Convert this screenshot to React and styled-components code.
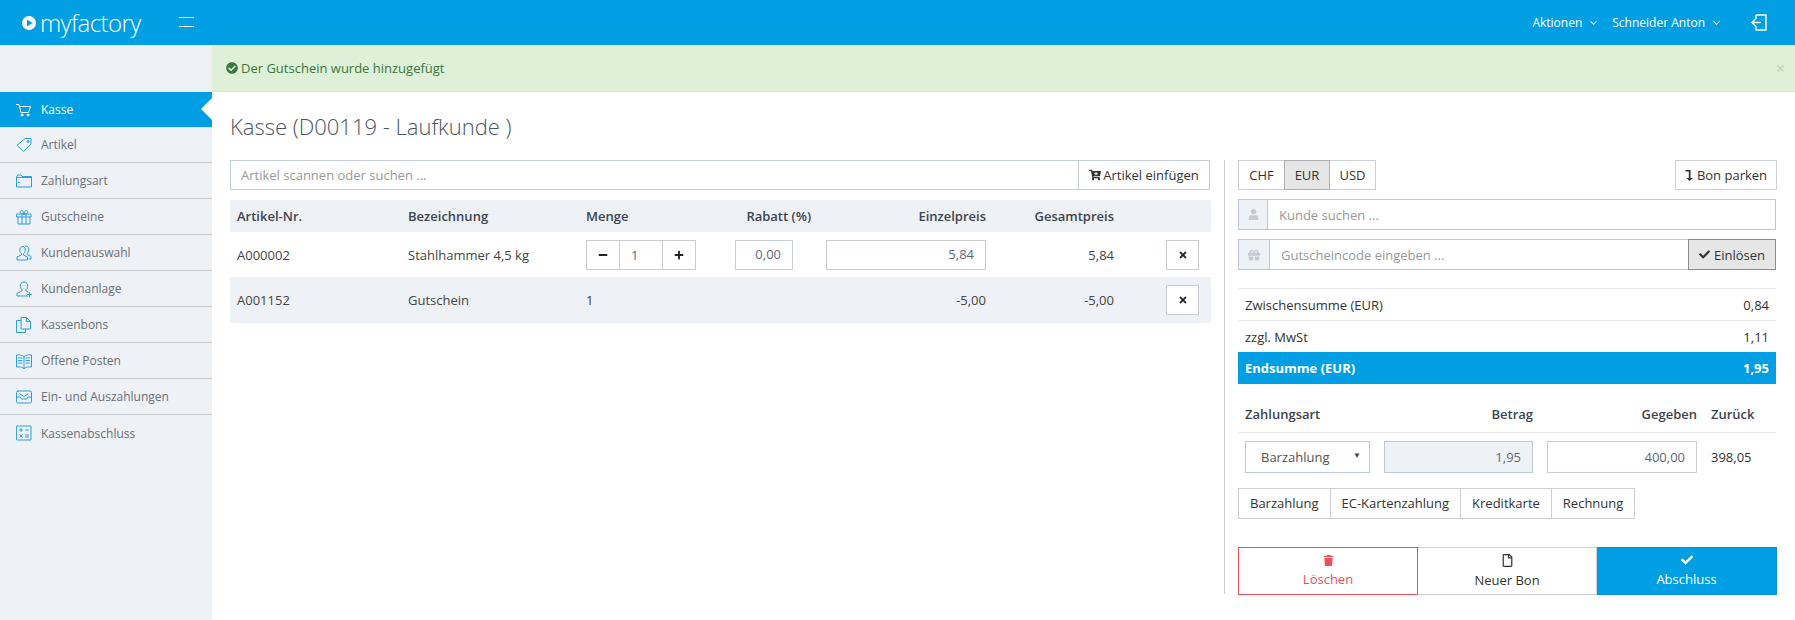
import React from 'react';
import styled, { createGlobalStyle } from 'styled-components';
import {
  FaCartPlus,
  FaCheck,
  FaCheckCircle,
  FaGift,
  FaMinus,
  FaPlus,
  FaRegFile,
  FaTimes,
  FaTrash,
  FaUser,
} from 'react-icons/fa';

const blue = '#009fe3';
const grey = '#eef1f5';

const line = { fill: 'none', stroke: 'currentColor', strokeWidth: 1, strokeLinejoin: 'round', strokeLinecap: 'round' };

const Svg = ({ children, size = 16 }) => (
  <svg width={size} height={size} viewBox="0 0 16 16" {...line}>
    {children}
  </svg>
);

const icons = {
  cart: (
    <Svg>
      <path d="M.5 2.5h2.5l2 8h7.5l2-6H4" />
      <circle cx="6" cy="13" r="1" />
      <circle cx="12" cy="13" r="1" />
    </Svg>
  ),
  tag: (
    <Svg>
      <path d="M9.5 1.5h5.5v5.5l-7.5 7.5-6-6z" />
      <circle cx="12" cy="4.5" r="1" />
    </Svg>
  ),
  folder: (
    <Svg>
      <path d="M.5 4.5v9.5h15V3.5H6l-1-1.5H1.5l-1 2.5zM.5 4.5H15" />
      <path d="M2.5 9.5h1" />
    </Svg>
  ),
  gift: (
    <Svg>
      <path d="M1 5h14v3H1zM2 8v7h12V8M6 5v10M10 5v10" />
      <path d="M8 5C5 5 3.5 3.5 4.5 2S7.500 1.500 8 5c.5-3.500 2.500-4.500 3.500-3S11 5 8 5z" />
    </Svg>
  ),
  users: (
    <Svg>
      <path d="M7 1.500c-2.500 0-3.500 2-3.200 4.200.2 1.300.7 2.300 1.700 3v1.300L1 12v3h10.500v-3l-4-2V8.700c1-.7 1.500-1.700 1.700-3C9.500 3.500 9 1.500 7 1.500z" />
      <path d="M9.500 1c2.500 0 3.500 1.500 3.300 4-.1 1.300-.6 2.500-1.600 3.200V9.500l3.800 2v2.500h-2" />
    </Svg>
  ),
  userPlus: (
    <Svg>
      <path d="M8 1c-2.800 0-4 2-3.700 4.500.2 1.400.7 2.500 1.700 3.200V10l-5 2.300V15h11" />
      <path d="M8 1c2.800 0 4 2 3.700 4.500-.2 1.400-.7 2.500-1.700 3.200V10l2 1" />
      <path d="M13.500 11.500v4M11.500 13.500h4" />
    </Svg>
  ),
  docs: (
    <Svg>
      <path d="M5 3.500H.5v12h9V12" />
      <path d="M5.500.5h5l4 4v7.500h-9z" />
      <path d="M10.500.5v4h4" />
    </Svg>
  ),
  book: (
    <Svg>
      <path d="M8 3.500C6 2 3 1.500 .5 2v12c2.500-.5 5.500 0 7.500 1.500 2-1.500 5-2 7.500-1.500V2C13 1.500 10 2 8 3.500zM8 3.500v12" />
      <path d="M2.500 5h3.500M2.500 7.500h3.500M2.500 10h3.500M10 5h3.500M10 7.500h3.500M10 10h3.500" />
    </Svg>
  ),
  inbox: (
    <Svg>
      <rect x=".5" y="2" width="15" height="12" rx="1.500" />
      <path d="M.5 8h3.500l1.500 2h5L12 8h3.500" />
      <path d="M4 5l4 2.500L12 5" />
    </Svg>
  ),
  calc: (
    <Svg>
      <rect x="1" y="1" width="14" height="14" />
      <path d="M3.500 5h3M5 3.500v3M9.500 5h3M3.800 9.700l2.400 2.400M6.200 9.700l-2.400 2.400M9.500 10h3M9.500 12h3" />
    </Svg>
  ),
};

const navItems = [
  ['Kasse', 'cart'],
  ['Artikel', 'tag'],
  ['Zahlungsart', 'folder'],
  ['Gutscheine', 'gift'],
  ['Kundenauswahl', 'users'],
  ['Kundenanlage', 'userPlus'],
  ['Kassenbons', 'docs'],
  ['Offene Posten', 'book'],
  ['Ein- und Auszahlungen', 'inbox'],
  ['Kassenabschluss', 'calc'],
];

const App = () => {
  return (
    <Page>
      <GlobalStyle />
      <TopBar>
        <Logo>
          <svg width="14" height="14" viewBox="0 0 14 14">
            <circle cx="7" cy="7" r="7" fill="#fff" />
            <path d="M5 3.500 10.500 7 5 10.500z" fill={blue} />
          </svg>
          <span>myfactory</span>
        </Logo>
        <Burger />
        <TopMenu>
          <TopLink>
            Aktionen
            <Chevron />
          </TopLink>
          <TopLink>
            Schneider Anton
            <Chevron />
          </TopLink>
          <svg width="17" height="17" viewBox="0 0 17 17" fill="none" stroke="#fff" strokeWidth="1.400">
            <path d="M6 1h10v15H6v-4M6 5V1" />
            <path d="M11 8.500H2M5.500 5 2 8.500 5.500 12" />
          </svg>
        </TopMenu>
      </TopBar>
      <Body>
        <Sidebar>
          {navItems.map(([label, icon], index) => (
            <NavItem key={label} $active={index === 0}>
              {icons[icon]}
              <span>{label}</span>
            </NavItem>
          ))}
        </Sidebar>
        <Main>
          <Alert>
            <FaCheckCircle size={12} />
            <span>Der Gutschein wurde hinzugefügt</span>
            <AlertClose>×</AlertClose>
          </Alert>
          <Content>
            <Title>Kasse (D00119 - Laufkunde )</Title>
            <Columns>
              <LeftColumn>
                <SearchGroup>
                  <SearchInput placeholder="Artikel scannen oder suchen ..." />
                  <InsertButton>
                    <FaCartPlus size={12} />
                    Artikel einfügen
                  </InsertButton>
                </SearchGroup>
                <TableRow $head>
                  <Cell $first>Artikel-Nr.</Cell>
                  <Cell>Bezeichnung</Cell>
                  <Cell>Menge</Cell>
                  <Cell $right>Rabatt (%)</Cell>
                  <Cell $right>Einzelpreis</Cell>
                  <Cell $right>Gesamtpreis</Cell>
                  <Cell />
                </TableRow>
                <TableRow>
                  <Cell $first>A000002</Cell>
                  <Cell>Stahlhammer 4,5 kg</Cell>
                  <Cell>
                    <Stepper>
                      <StepButton>
                        <FaMinus size={10} />
                      </StepButton>
                      <StepValue>1</StepValue>
                      <StepButton>
                        <FaPlus size={10} />
                      </StepButton>
                    </Stepper>
                  </Cell>
                  <Cell $right>
                    <AmountBox $width={58} $offset={18}>0,00</AmountBox>
                  </Cell>
                  <Cell $right>
                    <AmountBox $width={160}>5,84</AmountBox>
                  </Cell>
                  <Cell $right>5,84</Cell>
                  <Cell>
                    <RemoveButton>
                      <FaTimes size={10} />
                    </RemoveButton>
                  </Cell>
                </TableRow>
                <TableRow $shaded>
                  <Cell $first>A001152</Cell>
                  <Cell>Gutschein</Cell>
                  <Cell>1</Cell>
                  <Cell />
                  <Cell $right>-5,00</Cell>
                  <Cell $right>-5,00</Cell>
                  <Cell>
                    <RemoveButton>
                      <FaTimes size={10} />
                    </RemoveButton>
                  </Cell>
                </TableRow>
              </LeftColumn>
              <RightColumn>
                <TopActions>
                  <Currencies>
                    <Currency>CHF</Currency>
                    <Currency $active>EUR</Currency>
                    <Currency>USD</Currency>
                  </Currencies>
                  <ParkButton>
                    <svg width="8" height="11" viewBox="0 0 8 11" fill="#333">
                      <path d="M.5 0h5v8H8L4.500 11 1.500 8h2.300V1.600H.5z" />
                    </svg>
                    Bon parken
                  </ParkButton>
                </TopActions>
                <InputGroup>
                  <Addon $width={29}>
                    <FaUser size={11} />
                  </Addon>
                  <GroupInput placeholder="Kunde suchen ..." />
                </InputGroup>
                <InputGroup>
                  <Addon $width={31}>
                    <FaGift size={12} />
                  </Addon>
                  <GroupInput placeholder="Gutscheincode eingeben ..." />
                  <RedeemButton>
                    <FaCheck size={11} />
                    Einlösen
                  </RedeemButton>
                </InputGroup>
                <Totals>
                  <TotalRow>
                    <span>Zwischensumme (EUR)</span>
                    <span>0,84</span>
                  </TotalRow>
                  <TotalRow>
                    <span>zzgl. MwSt</span>
                    <span>1,11</span>
                  </TotalRow>
                  <TotalRow $grand>
                    <span>Endsumme (EUR)</span>
                    <span>1,95</span>
                  </TotalRow>
                </Totals>
                <PaymentHead>
                  <span>Zahlungsart</span>
                  <HeadRight>Betrag</HeadRight>
                  <HeadRight>Gegeben</HeadRight>
                  <span>Zurück</span>
                </PaymentHead>
                <PaymentRow>
                  <SelectBox>Barzahlung</SelectBox>
                  <PayAmount $disabled>1,95</PayAmount>
                  <PayAmount>400,00</PayAmount>
                  <span>398,05</span>
                </PaymentRow>
                <PayMethods>
                  <PayMethod>Barzahlung</PayMethod>
                  <PayMethod>EC-Kartenzahlung</PayMethod>
                  <PayMethod>Kreditkarte</PayMethod>
                  <PayMethod>Rechnung</PayMethod>
                </PayMethods>
                <Actions>
                  <ActionButton $variant="danger">
                    <FaTrash size={11} />
                    Löschen
                  </ActionButton>
                  <ActionButton>
                    <FaRegFile size={13} />
                    Neuer Bon
                  </ActionButton>
                  <ActionButton $variant="primary">
                    <FaCheck size={12} />
                    Abschluss
                  </ActionButton>
                </Actions>
              </RightColumn>
            </Columns>
          </Content>
        </Main>
      </Body>
    </Page>
  );
};

export default App;

const GlobalStyle = createGlobalStyle`
  html, body {
    margin: 0;
    padding: 0;
    background: #fff;
  }
  * {
    box-sizing: border-box;
  }
  body {
    font-family: "Open Sans", "Liberation Sans", sans-serif;
    font-size: 13px;
    color: #333;
  }
  input {
    font: inherit;
    outline: none;
  }
  input::placeholder {
    color: #999;
    opacity: 1;
  }
`;

const Page = styled.div`
  width: 1795px;
  height: 620px;
  display: flex;
  flex-direction: column;
  overflow: hidden;
`;

const TopBar = styled.header`
  height: 45px;
  flex: none;
  background: ${blue};
  display: flex;
  align-items: center;
  padding: 0 28px 0 22px;
  color: #fff;
`;

const Logo = styled.div`
  display: flex;
  align-items: center;
  gap: 4px;
  width: 157px;
  span {
    font-size: 24px;
    font-weight: 300;
    letter-spacing: -0.6px;
    line-height: 30px;
  }
`;

const Burger = styled.div`
  width: 15px;
  height: 10px;
  border-top: 1px solid #fff;
  border-bottom: 1px solid #fff;
  margin-top: -1px;
`;

const TopMenu = styled.div`
  margin-left: auto;
  display: flex;
  align-items: center;
  gap: 16px;
  font-size: 12px;
  svg {
    margin-left: 15px;
  }
`;

const TopLink = styled.div`
  display: flex;
  align-items: center;
  gap: 9px;
`;

const Chevron = styled.i`
  width: 5px;
  height: 5px;
  border-right: 1px solid #cfeaf8;
  border-bottom: 1px solid #cfeaf8;
  transform: rotate(45deg);
  margin-top: -3px;
`;

const Body = styled.div`
  flex: 1;
  display: flex;
  min-height: 0;
`;

const Sidebar = styled.nav`
  width: 212px;
  flex: none;
  background: ${grey};
  padding-top: 47px;
`;

const NavItem = styled.div`
  position: relative;
  height: ${(p) => (p.$active ? 35 : 36)}px;
  display: flex;
  align-items: center;
  gap: 9px;
  padding-left: 16px;
  font-size: 12px;
  color: ${(p) => (p.$active ? '#fff' : '#6a6f78')};
  background: ${(p) => (p.$active ? blue : 'transparent')};
  border-bottom: ${(p) => (p.$active ? '0' : '1px solid #c8cacd')};
  svg {
    color: ${(p) => (p.$active ? '#fff' : '#2a9fe0')};
    flex: none;
  }
  &:last-child {
    border-bottom: 0;
  }
  ${(p) =>
    p.$active &&
    `&::after {
      content: '';
      position: absolute;
      right: 0;
      top: 6px;
      border-style: solid;
      border-width: 11px 11px 11px 0;
      border-color: transparent #fff transparent transparent;
    }`}
`;

const Main = styled.main`
  flex: 1;
  min-width: 0;
  display: flex;
  flex-direction: column;
`;

const Alert = styled.div`
  height: 47px;
  flex: none;
  background: #dff0d8;
  border-bottom: 1px solid #d6e9c6;
  color: #3c763d;
  display: flex;
  align-items: center;
  gap: 3px;
  padding: 0 10px 0 14px;
`;

const AlertClose = styled.span`
  margin-left: auto;
  font-size: 16px;
  font-weight: 700;
  color: #c5d6be;
  line-height: 1;
`;

const Content = styled.div`
  padding: 0 18px;
`;

const Title = styled.h1`
  margin: 19px 0 19px;
  font-size: 22px;
  line-height: 30px;
  font-weight: 300;
  color: #4b5563;
`;

const Columns = styled.div`
  display: flex;
`;

const LeftColumn = styled.section`
  width: 981px;
  flex: none;
`;

const SearchGroup = styled.div`
  display: flex;
  height: 30px;
  width: 980px;
  border: 1px solid #c5cdda;
  margin-bottom: 10px;
`;

const SearchInput = styled.input`
  flex: 1;
  min-width: 0;
  border: 0;
  padding: 0 10px;
`;

const InsertButton = styled.button`
  width: 131px;
  border: 0;
  border-left: 1px solid #c5cdda;
  background: #fff;
  font: inherit;
  color: #333;
  display: flex;
  align-items: center;
  justify-content: center;
  gap: 2px;
  padding: 0;
`;

const TableRow = styled.div`
  display: grid;
  grid-template-columns: 178px 178px 135px 90px 175px 128px 97px;
  align-items: center;
  height: ${(p) => (p.$head ? 32 : p.$shaded ? 46 : 45)}px;
  background: ${(p) => (p.$head || p.$shaded ? grey : '#fff')};
  font-weight: ${(p) => (p.$head ? 600 : 400)};
  color: ${(p) => (p.$head ? '#3d4450' : '#444')};
`;

const Cell = styled.div`
  padding-left: ${(p) => (p.$first ? '7px' : '0')};
  display: flex;
  justify-content: ${(p) => (p.$right ? 'flex-end' : 'flex-start')};
  white-space: nowrap;
`;

const Stepper = styled.div`
  display: flex;
  width: 110px;
  height: 30px;
  border: 1px solid #c8ccd4;
`;

const StepButton = styled.div`
  width: 32px;
  flex: none;
  display: flex;
  align-items: center;
  justify-content: center;
  color: #222;
`;

const StepValue = styled.div`
  flex: 1;
  border-left: 1px solid #c8ccd4;
  border-right: 1px solid #c8ccd4;
  padding-left: 11px;
  line-height: 28px;
  color: #667;
`;

const AmountBox = styled.div`
  width: ${(p) => p.$width}px;
  margin-right: ${(p) => p.$offset || 0}px;
  height: 30px;
  border: 1px solid #c8ccd4;
  background: #fff;
  text-align: right;
  padding-right: 11px;
  line-height: 27px;
  color: #667;
`;

const RemoveButton = styled.div`
  width: 33px;
  height: 30px;
  margin-left: 52px;
  border: 1px solid #c8ccd4;
  background: #fff;
  color: #222;
  display: flex;
  align-items: center;
  justify-content: center;
`;

const RightColumn = styled.aside`
  width: 553px;
  flex: none;
  height: 434px;
  margin-left: 13px;
  border-left: 1px solid #c8ccd0;
  padding-left: 13px;
`;

const TopActions = styled.div`
  display: flex;
  justify-content: space-between;
  margin-bottom: 9px;
`;

const Currencies = styled.div`
  display: flex;
`;

const Currency = styled.div`
  width: ${(p) => (p.$active ? 46 : 47)}px;
  height: 30px;
  line-height: 28px;
  text-align: center;
  margin-left: -1px;
  border: 1px solid ${(p) => (p.$active ? '#adadad' : '#ccd0d6')};
  background: ${(p) => (p.$active ? '#e6e6e6' : '#fff')};
  position: relative;
  z-index: ${(p) => (p.$active ? 1 : 0)};
  &:first-child {
    margin-left: 0;
  }
`;

const ParkButton = styled.div`
  width: 102px;
  height: 30px;
  border: 1px solid #ccd0d6;
  display: flex;
  align-items: center;
  justify-content: center;
  gap: 4px;
`;

const InputGroup = styled.div`
  display: flex;
  width: 538px;
  height: 31px;
  margin-bottom: 9px;
  border: 1px solid #bcc8d8;
`;

const Addon = styled.div`
  width: ${(p) => p.$width}px;
  flex: none;
  background: ${grey};
  border-right: 1px solid #bcc8d8;
  color: #c3cad5;
  display: flex;
  align-items: center;
  justify-content: center;
`;

const GroupInput = styled.input`
  flex: 1;
  min-width: 0;
  border: 0;
  padding: 0 11px;
`;

const RedeemButton = styled.div`
  width: 88px;
  flex: none;
  margin: -1px -1px -1px 0;
  background: #e6e6e6;
  border: 1px solid #8c8c8c;
  display: flex;
  align-items: center;
  justify-content: center;
  gap: 4px;
`;

const Totals = styled.div`
  width: 538px;
  margin-top: 18px;
`;

const TotalRow = styled.div`
  height: 32px;
  display: flex;
  align-items: center;
  justify-content: space-between;
  padding: 0 7px;
  border-top: 1px solid #e9e9e9;
  color: ${(p) => (p.$grand ? '#fff' : '#333')};
  background: ${(p) => (p.$grand ? blue : '#fff')};
  font-weight: ${(p) => (p.$grand ? 700 : 400)};
  ${(p) => p.$grand && 'border-top: 0;'}
`;

const paymentColumns = '125px 149px 150px 1fr';

const PaymentHead = styled.div`
  width: 538px;
  height: 38px;
  margin-top: 11px;
  padding: 0 7px 0 7px;
  display: grid;
  grid-template-columns: ${paymentColumns};
  column-gap: 14px;
  align-items: center;
  border-bottom: 1px solid #e9e9e9;
  font-weight: 600;
  color: #3d4450;
`;

const HeadRight = styled.span`
  text-align: right;
`;

const PaymentRow = styled.div`
  width: 538px;
  margin-top: 8px;
  padding: 0 7px;
  display: grid;
  grid-template-columns: ${paymentColumns};
  column-gap: 14px;
  align-items: center;
`;

const SelectBox = styled.div`
  position: relative;
  height: 32px;
  border: 1px solid #bcc8d8;
  line-height: 30px;
  padding-left: 15px;
  color: #555;
  &::after {
    content: '▼';
    position: absolute;
    right: 8px;
    top: -2px;
    font-size: 8px;
    color: #444;
  }
`;

const PayAmount = styled.div`
  height: 32px;
  border: 1px solid ${(p) => (p.$disabled ? '#bcc8d8' : '#c8ccd4')};
  background: ${(p) => (p.$disabled ? grey : '#fff')};
  text-align: right;
  line-height: 30px;
  padding-right: 11px;
  color: #667;
`;

const PayMethods = styled.div`
  display: flex;
  height: 31px;
  margin-top: 15px;
`;

const PayMethod = styled.div`
  padding: 0 11px;
  line-height: 29px;
  border: 1px solid #ccd0d6;
  margin-left: -1px;
  &:first-child {
    margin-left: 0;
  }
`;

const Actions = styled.div`
  display: grid;
  grid-template-columns: 180px 179px 180px;
  width: 539px;
  height: 48px;
  margin-top: 28px;
`;

const ActionButton = styled.div`
  display: flex;
  flex-direction: column;
  align-items: center;
  justify-content: center;
  gap: 4px;
  border: 1px solid
    ${(p) => (p.$variant === 'danger' ? '#e8505b' : p.$variant === 'primary' ? '#0b8fd0' : '#ccd0d6')};
  border-left-width: ${(p) => (p.$variant === 'danger' ? '1px' : '0')};
  background: ${(p) => (p.$variant === 'primary' ? blue : '#fff')};
  color: ${(p) => (p.$variant === 'danger' ? '#e8505b' : p.$variant === 'primary' ? '#fff' : '#333')};
`;
